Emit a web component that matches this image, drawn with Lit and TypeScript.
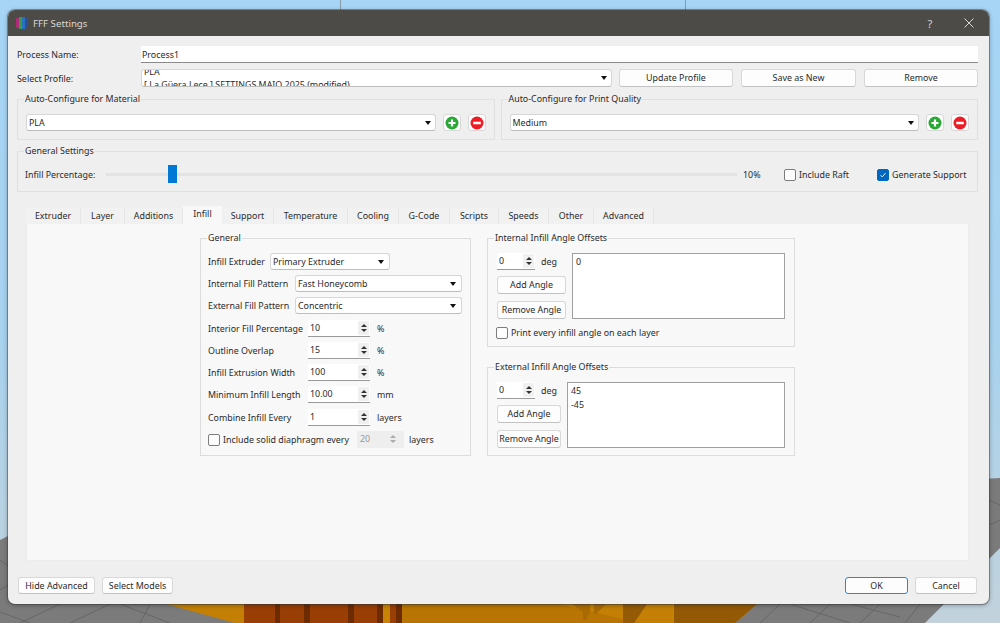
import { LitElement, html, css, svg } from 'lit';
import { customElement } from 'lit/decorators.js';

const TABS = ['Extruder', 'Layer', 'Additions', 'Infill', 'Support', 'Temperature', 'Cooling', 'G-Code', 'Scripts', 'Speeds', 'Other', 'Advanced'];
const TAB_WIDTHS = [55, 44, 58, 39, 52, 74, 51, 51, 49, 50, 45, 60];

const combo = (text: string, cls = '') => html`<div class="combo ${cls}"><span>${text}</span><i class="arrow"></i></div>`;

const spin = (value: string, cls = '') => html`
  <div class="spin ${cls}">
    <span>${value}</span>
    <div class="spin-btns"><i class="up"></i><i class="down"></i></div>
  </div>
`;

const plus = html`<div class="icon-btn"><svg width="14" height="14" viewBox="0 0 14 14"><circle cx="7" cy="7" r="6.5" fill="#2aa836"/><path d="M7 3.5v7M3.5 7h7" stroke="#fff" stroke-width="2.2"/></svg></div>`;
const minus = html`<div class="icon-btn"><svg width="14" height="14" viewBox="0 0 14 14"><circle cx="7" cy="7" r="6.5" fill="#ee1c25"/><path d="M3.2 7h7.6" stroke="#fff" stroke-width="2.6"/></svg></div>`;

@customElement('app-root')
export class AppRoot extends LitElement {
  static styles = css`
    :host {
      display: block;
      position: relative;
      width: 1000px;
      height: 623px;
      overflow: hidden;
      font-family: "Noto Sans", "Open Sans", sans-serif;
      font-size: 8.9px;
      color: #2a2a2a;
    }
    .desktop { position: absolute; left: 0; top: 0; }
    .window {
      position: absolute;
      left: 8px;
      top: 10px;
      width: 981px;
      height: 594px;
      background: #efefef;
      border-radius: 7px;
      overflow: hidden;
      box-shadow: 0 0 0 1px rgba(60, 60, 60, 0.45), 0 1px 5px rgba(0, 0, 0, 0.35);
      display: flex;
      flex-direction: column;
    }
    .titlebar {
      height: 26px;
      flex: none;
      background: #4d4b48;
      color: #d8d8d6;
      display: flex;
      align-items: center;
      padding: 0 0 0 8px;
      font-size: 9.7px;
    }
    .titlebar svg { margin-right: 5px; flex: none; }
    .titlebar .title { flex: 1; }
    .help { width: 16px; font-size: 11px; margin-right: 26px; text-align: center; flex: none; }
    .titlebar .close { margin-right: 15px; }
    .content { flex: 1; padding: 10px 10px 0 9px; display: flex; flex-direction: column; }
    .row { display: flex; align-items: center; }
    .field-label { width: 124px; flex: none; }
    .name-input {
      flex: 1;
      height: 16px;
      margin-right: 1px;
      background: #fff;
      border-bottom: 1px solid #8a8a8a;
      line-height: 18px;
      padding-left: 1px;
    }
    .profile-row { margin-top: 6px; height: 18px; }
    .combo {
      position: relative;
      background: #fff;
      border: 1px solid #d6d6d6;
      border-bottom-color: #bdbdbd;
      border-radius: 3px;
      height: 17px;
      box-sizing: border-box;
      line-height: 15px;
      padding-left: 2px;
      white-space: nowrap;
      overflow: hidden;
      flex: none;
    }
    .arrow {
      position: absolute;
      right: 4px;
      top: 6px;
      border-left: 3.5px solid transparent;
      border-right: 3.5px solid transparent;
      border-top: 4px solid #111;
    }
    .profile-combo { width: 471px; height: 18px; margin-right: 7px; }
    .profile-text { position: absolute; left: 2px; top: -5px; line-height: 13px; }
    .btn {
      box-sizing: border-box;
      background: #fdfdfd;
      border: 1px solid #d8d8d8;
      border-bottom-color: #c2c2c2;
      border-radius: 3px;
      height: 18px;
      line-height: 16px;
      text-align: center;
      flex: none;
      white-space: nowrap;
    }
    .top-btn { margin-right: 8px; }
    .top-btn:last-child { margin-right: 0; }
    .auto-row { display: flex; gap: 6px; margin-top: 12px; margin-right: 1px; }
    .group {
      position: relative;
      box-sizing: border-box;
      border: 1px solid #e0e0e0;
    }
    .group > .legend {
      position: absolute;
      left: 6px;
      top: -7px;
      padding: 0 1px;
      background: inherit;
      line-height: 12px;
      white-space: nowrap;
    }
    .auto-group {
      width: 478px;
      height: 41px;
      background: #efefef;
      display: flex;
      align-items: center;
      gap: 7px;
      padding: 6px 8px 0;
    }
    .auto-group .combo { flex: 1; }
    .icon-btn {
      box-sizing: border-box;
      width: 18px;
      height: 17px;
      background: #fdfdfd;
      border: 1px solid #d8d8d8;
      border-radius: 3px;
      display: flex;
      align-items: center;
      justify-content: center;
    }
    .general {
      margin-top: 11px;
      margin-right: 1px;
      height: 41px;
      background: #efefef;
      display: flex;
      align-items: center;
      padding: 6px 0 0 7px;
    }
    .slider-label { width: 81px; flex: none; }
    .slider { position: relative; width: 631px; height: 3px; background: #e3e3e3; flex: none; }
    .thumb { position: absolute; left: 62px; top: -8px; width: 9px; height: 18px; background: #0078d4; }
    .pct { margin-left: 6px; width: 41px; flex: none; }
    .check { display: flex; align-items: center; gap: 3px; white-space: nowrap; }
    .box {
      box-sizing: border-box;
      width: 12px;
      height: 12px;
      border: 1px solid #7c7c7c;
      border-radius: 2px;
      background: #fdfdfd;
      flex: none;
    }
    .box.on { background: #0067c0; border-color: #0067c0; display: flex; align-items: center; justify-content: center; }
    .raft { width: 93px; flex: none; }
    .tabs { display: flex; margin: 16px 0 0 9px; height: 16px; align-items: flex-end; }
    .tab {
      box-sizing: border-box;
      height: 16px;
      line-height: 16px;
      text-align: center;
      background: #f1f1f1;
      border-right: 1px solid #e6e6e6;
    }
    .tab.active { height: 18px; background: #f8f8f8; line-height: 16px; border-right: 0; }
    .panel {
      margin: 0 10px 0 9px;
      height: 337px;
      box-sizing: border-box;
      background: #f8f8f8;
      border: 1px solid #ececec;
      border-top: 0;
      padding: 14px 0 0 173px;
      display: flex;
      gap: 16px;
    }
    .infill {
      width: 271px;
      height: 218px;
      background: #f8f8f8;
      border-color: #dcdcdc;
      padding: 11px 6px 0 7px;
    }
    .infill .row { height: 22.3px; white-space: nowrap; }
    .infill .lab { flex: none; }
    .infill .unit { margin-left: 7px; }
    .c1 { width: 120px; }
    .c2 { width: 167px; }
    .c1 .arrow, .c2 .arrow { right: 5px; }
    .spin {
      position: relative;
      box-sizing: border-box;
      background: #fff;
      border-bottom: 1px solid #9a9a9a;
      height: 17px;
      line-height: 16px;
      padding-left: 2px;
      flex: none;
    }
    .spin-btns {
      position: absolute;
      right: 1px;
      top: 1px;
      width: 11px;
      height: 14px;
      background: #f0f0f0;
      display: flex;
      flex-direction: column;
      align-items: center;
      justify-content: center;
      gap: 2px;
    }
    .spin-btns i { width: 0; height: 0; border-left: 3px solid transparent; border-right: 3px solid transparent; }
    .spin-btns .up { border-bottom: 3px solid #333; }
    .spin-btns .down { border-top: 3px solid #333; }
    .num { width: 62px; }
    .spin.off { background: #eeeeee; border-bottom: 0; color: #999; border-radius: 2px; width: 47px; padding-left: 3px; }
    .spin.off .spin-btns { background: #eeeeee; right: 6px; }
    .spin.off .up { border-bottom-color: #aaa; }
    .spin.off .down { border-top-color: #aaa; }
    .infill .off + .unit { margin-left: 5px; }
    .right { display: flex; flex-direction: column; gap: 20px; }
    .angle {
      width: 308px;
      background: #f8f8f8;
      border-color: #dcdcdc;
      display: flex;
      padding: 14px 9px 0 9px;
    }
    .angle-left { flex: none; display: flex; flex-direction: column; }
    .deg-row { display: flex; align-items: center; gap: 6px; height: 16px; }
    .deg-spin { width: 38px; }
    .angle-btn { margin-top: 7px; height: 18px; }
    .list {
      box-sizing: border-box;
      background: #fff;
      border: 1px solid #a0a0a0;
      padding: 1px 3px;
      line-height: 14px;
    }
    .angle.internal { height: 109px; position: relative; }
    .angle.external { height: 89px; }
    .angle.internal .angle-left { width: 69px; margin-right: 6px; }
    .angle.external .angle-left { width: 64px; margin-right: 6px; }
    .angle.internal .list { width: 214px; height: 66px; }
    .angle.external .list { width: 219px; height: 66px; }
    .print-check { position: absolute; left: 8px; top: 87px; }
    .footer { display: flex; padding: 16px 1px 0 1px; margin-right: 1px; gap: 7px; }
    .footer .btn { height: 17px; line-height: 15px; }
    .spacer { flex: 1; }
    .footer .ok { border: 1.5px solid #2a86d6; border-radius: 3px; }
  `;

  renderDesktop() {
    return svg`
      <defs>
        <linearGradient id="sky" x1="0" y1="0" x2="0" y2="1">
          <stop offset="0" stop-color="#a6d5f5"/>
          <stop offset="0.55" stop-color="#a9d2ee"/>
          <stop offset="1" stop-color="#c2d2dc"/>
        </linearGradient>
      </defs>
      <rect width="1000" height="623" fill="url(#sky)"/>
      <rect x="340" width="1" height="12" fill="#8a9aa6"/>
      <rect x="685" width="1" height="12" fill="#8a9aa6"/>
      <path d="M0 540L8 536L1000 478V548L925 623H0Z" fill="#7b7b7b"/>
      <path d="M0 560L8 566M0 590L8 585M0 612L30 623M60 604L20 623M110 604L70 623M150 604L140 623M120 604L170 623M780 604L760 623M830 604L810 623M880 604L860 623M920 604L905 623M790 604L850 623M850 604L900 617M989 500L1000 505M989 525L1000 520" stroke="#5f5f5f" stroke-width="0.7" fill="none"/>
      <path d="M166 604H757L735 623H235Z" fill="#c38004"/>
      <rect x="244" y="604" width="158" height="19" fill="#993e04"/>
      <rect x="383" y="604" width="7" height="19" fill="#c98405"/>
      <path d="M275 604h5v19h-5zM304 604h6v19h-6zM348 604h6v19h-6zM377 604h6v19h-6zM396 604h6v19h-6z" fill="#6d2b02"/>
      <path d="M402 604H560L640 623H402Z" fill="#b97503"/>
      <path d="M623 604H647L634 623H623Z" fill="#955a05"/>
      <path d="M572 604h18v8l-4 8h-3v-8zM594 604h12l-10 10h-2z" fill="#a96a04"/>
      <path d="M674 604H757L735 623H674Z" fill="#935905"/>
      <rect x="673" y="604" width="1" height="19" fill="#9a8a66"/>
    `;
  }

  render() {
    return html`
      <svg class="desktop" width="1000" height="623">${this.renderDesktop()}</svg>
      <div class="window">
        <div class="titlebar">
          <svg width="12" height="14" viewBox="0 0 12 14">
            <rect x="0" y="2" width="3" height="10" rx="1" fill="#b22a7a"/>
            <rect x="3" y="1" width="3" height="12" fill="#3a9a45"/>
            <rect x="6" y="1" width="3" height="12" fill="#2a6fc0"/>
            <rect x="9" y="2" width="3" height="10" rx="1" fill="#2a4fa0"/>
          </svg>
          <span class="title">FFF Settings</span>
          <span class="help">?</span>
          <svg class="close" width="10" height="10" viewBox="0 0 10 10"><path d="M.5.5l9 9M9.5.5l-9 9" stroke="#d8d8d6" stroke-width="1"/></svg>
        </div>
        <div class="content">
          <div class="row">
            <div class="field-label">Process Name:</div>
            <div class="name-input">Process1</div>
          </div>
          <div class="row profile-row">
            <div class="field-label">Select Profile:</div>
            <div class="combo profile-combo">
              <span class="profile-text">PLA<br />[ La Güera Lece ] SETTINGS MAIO 2025 (modified)</span>
              <i class="arrow"></i>
            </div>
            <div class="btn top-btn" style="width:114px">Update Profile</div>
            <div class="btn top-btn" style="width:115px">Save as New</div>
            <div class="btn top-btn" style="width:114px">Remove</div>
          </div>
          <div class="auto-row">
            <div class="group auto-group">
              <span class="legend">Auto-Configure for Material</span>
              ${combo('PLA')}${plus}${minus}
            </div>
            <div class="group auto-group">
              <span class="legend">Auto-Configure for Print Quality</span>
              ${combo('Medium')}${plus}${minus}
            </div>
          </div>
          <div class="group general">
            <span class="legend">General Settings</span>
            <div class="slider-label">Infill Percentage:</div>
            <div class="slider"><div class="thumb"></div></div>
            <div class="pct">10%</div>
            <div class="check raft"><div class="box"></div>Include Raft</div>
            <div class="check"><div class="box on"><svg width="8" height="8" viewBox="0 0 8 8"><path d="M1.5 4.2l1.7 1.7 3.4-3.8" fill="none" stroke="#fff" stroke-width="0.9"/></svg></div>Generate Support</div>
          </div>
          <div class="tabs">
            ${TABS.map((t, i) => html`<div class="tab ${t === 'Infill' ? 'active' : ''}" style="width:${TAB_WIDTHS[i]}px">${t}</div>`)}
          </div>
          <div class="panel">
            <div class="group infill">
              <span class="legend">General</span>
              <div class="row"><span class="lab" style="width:62px">Infill Extruder</span>${combo('Primary Extruder', 'c1')}</div>
              <div class="row"><span class="lab" style="width:87px">Internal Fill Pattern</span>${combo('Fast Honeycomb', 'c2')}</div>
              <div class="row"><span class="lab" style="width:87px">External Fill Pattern</span>${combo('Concentric', 'c2')}</div>
              <div class="row"><span class="lab" style="width:100px">Interior Fill Percentage</span>${spin('10', 'num')}<span class="unit">%</span></div>
              <div class="row"><span class="lab" style="width:100px">Outline Overlap</span>${spin('15', 'num')}<span class="unit">%</span></div>
              <div class="row"><span class="lab" style="width:100px">Infill Extrusion Width</span>${spin('100', 'num')}<span class="unit">%</span></div>
              <div class="row"><span class="lab" style="width:100px">Minimum Infill Length</span>${spin('10.00', 'num')}<span class="unit">mm</span></div>
              <div class="row"><span class="lab" style="width:100px">Combine Infill Every</span>${spin('1', 'num')}<span class="unit">layers</span></div>
              <div class="row">
                <div class="check" style="width:149px"><div class="box"></div>Include solid diaphragm every</div>
                ${spin('20', 'off')}<span class="unit">layers</span>
              </div>
            </div>
            <div class="right">
              <div class="group angle internal">
                <span class="legend">Internal Infill Angle Offsets</span>
                <div class="angle-left">
                  <div class="deg-row">${spin('0', 'deg-spin')}<span>deg</span></div>
                  <div class="btn angle-btn">Add Angle</div>
                  <div class="btn angle-btn">Remove Angle</div>
                </div>
                <div class="list">0</div>
                <div class="check print-check"><div class="box"></div>Print every infill angle on each layer</div>
              </div>
              <div class="group angle external">
                <span class="legend">External Infill Angle Offsets</span>
                <div class="angle-left">
                  <div class="deg-row">${spin('0', 'deg-spin')}<span>deg</span></div>
                  <div class="btn angle-btn">Add Angle</div>
                  <div class="btn angle-btn">Remove Angle</div>
                </div>
                <div class="list">45<br />-45</div>
              </div>
            </div>
          </div>
          <div class="footer">
            <div class="btn" style="width:77px">Hide Advanced</div>
            <div class="btn" style="width:71px">Select Models</div>
            <div class="spacer"></div>
            <div class="btn ok" style="width:63px">OK</div>
            <div class="btn" style="width:62px">Cancel</div>
          </div>
        </div>
      </div>
    `;
  }
}
